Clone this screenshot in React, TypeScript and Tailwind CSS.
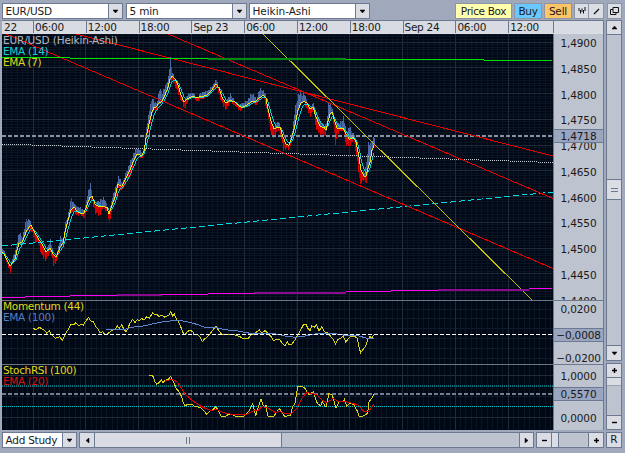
import type { ReactNode } from "react";

type Point = [number, number];

const TIMES = ["06:00", "12:00", "18:00", "Sep 23", "06:00", "12:00", "18:00", "Sep 24", "06:00"];
const PRICES = ["1,4900", "1,4850", "1,4800", "1,4750", "1,4700", "1,4650", "1,4600", "1,4550", "1,4500", "1,4450", "1,4400"];

// x, fast average, bar top, bar bottom
const BARS: number[][] = [
  [2, 252, 249, 253], [4, 254, 251, 256], [7, 260, 259, 266], [10, 266, 265, 273], [12, 263, 257, 264], [15, 259, 250, 260],
  [17, 250, 238, 251], [19, 243, 231, 244], [22, 242, 236, 243], [26, 232, 217, 233], [29, 227, 218, 229], [31, 225, 223, 233],
  [35, 233, 232, 243], [38, 238, 237, 244], [42, 244, 243, 259], [46, 252, 250, 261], [50, 248, 239, 252], [53, 254, 253, 267],
  [56, 257, 254, 262], [60, 247, 236, 248], [63, 243, 236, 245], [65, 232, 222, 235], [68, 220, 211, 221], [71, 210, 196, 213],
  [74, 207, 204, 214], [77, 211, 207, 216], [80, 213, 207, 215], [84, 213, 211, 220], [87, 205, 192, 207], [90, 197, 183, 199],
  [92, 196, 194, 204], [95, 204, 202, 214], [99, 206, 200, 217], [103, 206, 196, 208], [107, 207, 205, 213], [109, 214, 212, 225],
  [112, 205, 194, 207], [115, 197, 187, 199], [118, 184, 175, 188], [122, 186, 183, 191], [126, 178, 170, 180], [129, 172, 163, 180],
  [133, 162, 152, 163], [137, 154, 146, 156], [142, 155, 153, 158], [144, 151, 145, 152], [146, 138, 125, 140], [149, 124, 108, 127],
  [152, 112, 95, 114], [154, 107, 101, 110], [156, 107, 103, 112], [159, 103, 88, 104], [162, 101, 90, 102], [165, 95, 85, 97],
  [168, 87, 75, 89], [170, 79, 57, 81], [172, 76, 73, 82], [175, 79, 77, 88], [178, 85, 83, 96], [181, 95, 93, 102],
  [184, 102, 100, 110], [188, 98, 92, 100], [192, 96, 93, 98], [197, 97, 95, 101], [202, 96, 92, 99], [207, 95, 91, 97],
  [211, 91, 86, 93], [216, 84, 79, 87], [219, 88, 87, 97], [222, 97, 95, 106], [226, 103, 101, 110], [230, 100, 93, 102],
  [234, 101, 99, 105], [239, 106, 104, 112], [242, 107, 103, 109], [247, 105, 99, 106], [252, 101, 91, 103], [256, 101, 99, 105],
  [259, 98, 88, 100], [263, 95, 89, 97], [266, 98, 96, 110], [268, 109, 107, 120], [271, 121, 119, 137], [274, 129, 127, 140],
  [277, 127, 119, 129], [280, 127, 125, 136], [283, 137, 135, 152], [286, 144, 142, 149], [289, 145, 143, 151], [292, 137, 127, 138],
  [295, 125, 105, 127], [298, 110, 93, 112], [301, 103, 92, 105], [304, 101, 93, 103], [307, 103, 102, 113], [310, 109, 107, 117],
  [313, 107, 103, 109], [316, 117, 115, 132], [320, 126, 121, 135], [324, 127, 125, 139], [326, 130, 122, 132], [328, 121, 102, 122],
  [330, 114, 103, 116], [332, 112, 109, 115], [335, 122, 120, 145], [337, 128, 124, 136], [340, 128, 121, 131], [343, 128, 115, 131],
  [346, 134, 132, 148], [349, 139, 125, 147], [353, 137, 133, 139], [356, 142, 140, 157], [359, 157, 155, 181], [361, 170, 168, 185],
  [364, 176, 173, 180], [366, 176, 160, 184], [368, 168, 141, 170], [370, 162, 143, 164], [372, 150, 137, 152], [374, 145, 136, 148],
];

// study curves, in thirds of a pixel
const MOMENTUM = "100,115 108,120 118,112 128,118 135,122 140,130 148,122 153,133 160,138 165,145 172,142 180,140 187,152 193,138 200,125 207,115 212,103 222,103 228,98 235,107 245,103 250,105 258,92 266,82 272,93 280,95 286,108 295,118 300,128 308,125 315,135 325,130 335,122 345,118 352,108 358,115 365,105 372,118 378,125 385,112 390,100 398,88 405,98 412,88 418,92 425,85 432,90 440,80 448,85 458,68 465,75 470,72 478,80 485,75 492,82 500,78 507,75 512,65 518,78 523,72 528,85 535,95 542,110 550,130 555,135 562,125 570,120 578,125 583,135 590,132 600,140 607,155 613,148 623,140 635,125 648,108 655,120 665,133 680,135 695,132 710,137 720,140 730,147 745,145 755,132 763,133 770,125 778,120 785,128 795,122 805,132 815,142 820,152 830,147 840,150 847,160 855,168 862,155 868,165 875,163 885,150 895,133 903,118 910,105 918,102 923,115 930,122 935,108 943,112 950,105 957,123 965,110 973,125 983,128 993,140 1000,148 1007,162 1013,148 1023,145 1030,138 1037,155 1045,147 1053,138 1063,138 1072,145 1078,175 1082,188 1090,178 1097,168 1103,148 1110,140 1115,143 1122,135";
const MOMENTUM_EMA = "318,118 375,118 395,112 430,108 480,97 525,91 540,91 560,95 590,103 615,112 655,114 675,119 715,123 750,130 795,131 825,131 855,138 885,142 915,138 955,130 1005,131 1045,137 1075,137 1100,145 1122,145";
const STOCH = "448,256 458,257 465,275 470,283 478,277 484,270 488,278 497,270 505,268 512,259 520,275 530,298 537,305 545,320 550,340 556,347 565,342 575,342 585,350 600,352 610,360 620,373 630,362 640,358 648,350 655,362 663,378 675,380 687,372 700,375 710,380 730,380 740,370 748,363 758,340 767,378 775,350 783,328 790,348 795,355 798,345 803,378 820,380 828,370 838,355 845,368 855,380 872,375 877,352 885,340 893,290 905,288 915,295 927,315 940,305 952,340 962,348 967,335 978,352 987,310 997,315 1008,355 1017,335 1030,335 1033,328 1040,348 1052,338 1062,345 1073,365 1078,380 1090,378 1103,370 1107,335 1115,325 1122,313";
const STOCH_EMA = "495,272 520,268 535,280 555,312 575,330 600,347 615,355 635,362 650,358 670,368 700,374 735,375 760,362 773,362 785,350 800,352 825,367 840,365 855,370 875,370 890,355 905,325 920,308 935,310 950,315 965,330 980,338 1000,325 1015,335 1030,333 1055,340 1075,345 1090,363 1107,363 1122,343";

const toPoints = (raw: string) =>
  raw
    .split(" ")
    .map((p) => p.split(",").map(Number))
    .map(([x, y]) => `${(x / 3).toFixed(1)},${(290 + y / 3).toFixed(1)}`)
    .join(" ");

const range = (from: number, to: number, step: number) => {
  const out: number[] = [];
  for (let v = from; v <= to; v += step) out.push(v);
  return out;
};

function sample(x: number) {
  const i = Math.max(1, BARS.findIndex((b) => b[0] >= x));
  const a = BARS[i - 1];
  const b = BARS[i];
  const t = (x - a[0]) / (b[0] - a[0]);
  return [1, 2, 3].map((k) => a[k] + (b[k] - a[k]) * t);
}

const series = range(2, 374, 1).map((x) => {
  const [mid, top, bottom] = sample(x);
  return { x, mid, top, bottom };
});

let slow = series[0].mid;
const slowLine: Point[] = series.map((s) => {
  slow += (s.mid - slow) * 0.3;
  return [s.x, Math.round(slow + 0.5)];
});
const join = (pts: Point[]) => pts.map((p) => p.join(",")).join(" ");

const MAGENTA: [number, number, number, boolean][] = [
  [2, 25, 297, true], [25, 70, 296, true], [70, 117, 295, true], [117, 162, 294, false], [162, 208, 294, true], [208, 254, 293, true],
  [254, 300, 292, false], [300, 346, 292, false], [346, 391, 291, true], [391, 438, 290, true], [438, 484, 289, false], [484, 529, 289, false], [529, 552, 288, true],
];

function Chart() {
  return (
    <svg width="551" height="396" viewBox="2 34 551 396" shapeRendering="crispEdges" fill="none" className="block">
      <rect x="2" y="34" width="551" height="396" fill="#000816" />
      {/* minor grid */}
      <g stroke="#0a1422">
        {range(6.6, 552, 5.28).map((x) => <path key={x} d={`M${Math.floor(x) + 0.5} 34V430`} />)}
        {range(34.3, 299, 2.575).map((y) => <path key={y} d={`M2 ${Math.floor(y) + 0.5}H553`} />)}
      </g>
      <g stroke="#0f1a28">
        {[309, 318, 328, 338, 348, 358, 386, 396, 406].map((y) => <path key={y} d={`M2 ${y + 0.5}H553`} />)}
      </g>
      {/* major grid */}
      <g stroke="#202b39">
        {range(33, 552, 52.8).map((x) => <path key={x} d={`M${Math.floor(x) + 0.5} 34V430`} />)}
        {range(42, 299, 25.75).map((y) => <path key={y} d={`M2 ${Math.floor(y) + 0.5}H553`} />)}
        <path d="M2 375.5H553M2 417.5H553" />
      </g>

      {/* price bars */}
      {series.map(({ x, mid, top, bottom }) => {
        const j = (x * 7) % 5;
        const up = mid - top;
        const down = bottom - mid;
        const t = top + (up > 4 ? j * 0.18 * Math.min(up, 10) * 0.5 : 0);
        const b = bottom - (down > 4 ? j * 0.18 * Math.min(down, 10) * 0.5 : 0);
        return (
          <g key={x}>
            {up > 2.5 && <rect x={x} y={Math.round(t)} width="1" height={Math.max(1, Math.round(mid - t) + 1)} fill={j === 2 ? "#334d80" : "#4a69a5"} />}
            {down > 2.5 && <rect x={x} y={Math.round(mid)} width="1" height={Math.max(1, Math.round(b - mid))} fill={j === 3 ? "#8c0408" : "#d80000"} />}
          </g>
        );
      })}
      <polyline points={join(slowLine)} stroke="#00d0d8" />
      <polyline points={join(series.map((s): Point => [s.x, Math.round(s.mid)]))} stroke="#f0e810" />

      {/* horizontal levels */}
      <path d="M2 136H553" stroke="#8790a0" strokeWidth="2" strokeDasharray="4 2" />
      <path d="M2 144L553 162.5" stroke="#c8ccd2" strokeDasharray="1 1" />
      <path d="M2 246L553 192" stroke="#00dce4" strokeDasharray="6 3" />

      {/* trend lines */}
      <path d="M6 34L553 268.5M76 34L553 156M168 34L553 198.5" stroke="#e80000" />
      <path d="M263 34L532 300" stroke="#c4c010" />
      <path d="M2 57.5H70M70 58.5H208M346 59.5H484M484 60.5H552" stroke="#00e400" />
      <path d="M208 59H346" stroke="#008a10" strokeWidth="2" />
      {MAGENTA.map(([x1, x2, y, bright]) => (
        <rect key={x1} x={x1} y={y} width={x2 - x1} height={bright ? 1 : 2} fill={bright ? "#ff00f0" : "#8a0a90"} />
      ))}

      {/* momentum */}
      <rect x="2" y="300" width="551" height="1" fill="#6c7584" />
      <polyline points={toPoints(MOMENTUM)} stroke="#dcd418" />
      <polyline points={toPoints(MOMENTUM_EMA)} stroke="#5c84cc" />
      <path d="M2 334.5H553" stroke="#ffffff" strokeDasharray="4 2" />

      {/* stoch rsi */}
      <rect x="2" y="364" width="551" height="1" fill="#6c7584" />
      <path d="M2 386H553" stroke="#0a7078" strokeWidth="2" strokeDasharray="1 1" />
      <path d="M2 406.5H553" stroke="#00c4cc" strokeDasharray="1 1" />
      <path d="M2 394H553" stroke="#747e90" strokeWidth="2" strokeDasharray="4 2" />
      <polyline points={toPoints(STOCH)} stroke="#dcd418" />
      <polyline points={toPoints(STOCH_EMA)} stroke="#e00000" />
    </svg>
  );
}

function Arrow({ dir }: { dir: "up" | "down" | "left" | "right" }) {
  const d = { up: "M0 4h5L2.500 1z", down: "M0 1h5L2.500 4z", left: "M4 0v5L1 2.500z", right: "M1 0v5L4 2.500z" }[dir];
  return (
    <svg width="5" height="5" viewBox="0 0 5 5" className="shrink-0">
      <path d={d} fill="#000" stroke="#000" strokeWidth=".5" />
    </svg>
  );
}

function Sign({ plus }: { plus?: boolean }) {
  return (
    <svg width="5" height="5" viewBox="0 0 5 5" className="shrink-0">
      <path d={plus ? "M0 2.500H5M2.500 0V5" : "M0 2.500H5"} stroke="#000" strokeWidth="1.4" />
    </svg>
  );
}

function Key({ className, children }: { className: string; children?: ReactNode }) {
  return <div className={`flex shrink-0 items-center justify-center bg-[#dadde4] ${className}`}>{children}</div>;
}

function Select({ label, className }: { label: string; className: string }) {
  return (
    <div className={`flex h-4 shrink-0 border border-[#6c7990] bg-white ${className}`}>
      <span className="flex-1 pl-[2.5px] leading-[14px]">{label}</span>
      <Key className="w-[14px] border-l border-[#6c7990]"><Arrow dir="down" /></Key>
    </div>
  );
}

function Axis({ className, children }: { className: string; children: ReactNode }) {
  return <div className={`relative overflow-hidden text-center tracking-[-0.15px] ${className}`}>{children}</div>;
}

function Marker({ className, value }: { className: string; value: string }) {
  return (
    <div className={`absolute inset-x-0 h-[14px] border-y border-[#6c7990] bg-[#9aa5c0] leading-3 ${className}`}>{value}</div>
  );
}

export default function App() {
  return (
    <div className="flex h-[453px] w-[625px] flex-col overflow-hidden bg-[#a0a9bb] pl-0.5 font-['DejaVu_Sans','Verdana',sans-serif] text-[10.5px] whitespace-nowrap text-[#1a1a1a]">
      {/* toolbar */}
      <div className="flex h-5 shrink-0 pt-[3px]">
        <Select label="EUR/USD" className="w-[121px] tracking-[-0.15px]" />
        <Select label="5 min" className="ml-[3px] w-[121px] tracking-[-0.15px]" />
        <Select label="Heikin-Ashi" className="ml-[2px] w-[121px] tracking-[-0.05px]" />
        <button className="ml-[85px] h-4 w-[57px] border border-[#8d95a3] bg-[#ffffae] leading-[14px] tracking-[-0.35px]">Price Box</button>
        <button className="ml-[2px] h-4 w-7 border border-[#8d95a3] bg-[#68c8ff] leading-[14px] tracking-[-0.3px]">Buy</button>
        <button className="ml-[2px] h-4 w-7 border border-[#8d95a3] bg-[#ffc468] leading-[14px] tracking-[-0.2px]">Sell</button>
        <Key className="ml-[2px] h-4 w-[15px] border border-[#8d95a3]">
          <svg width="8" height="8" viewBox="0 0 8 8" fill="none" stroke="#111">
            <path d="M1 1V4M2.500 3V6.500M4 1.500V5M5.500 3V6.500M7 0V4" />
          </svg>
        </Key>
        <Key className="h-4 w-[15px] border border-l-0 border-[#8d95a3]">
          <svg width="7" height="7" viewBox="0 0 7 7"><path d="M1 6L6 1" stroke="#111" strokeWidth="1.2" /></svg>
        </Key>
        <Key className="ml-[3px] h-4 w-[15px] border border-[#8d95a3]">
          <svg width="9" height="8" viewBox="0 0 9 8" fill="none" stroke="#111">
            <path d="M3 .5H8.500V5.500H3zM3 2.500H.5V7.500H6V5.500" />
          </svg>
        </Key>
      </div>

      <div className="flex h-[410px] shrink-0">
        <div className="w-[602px] border-r border-[#6c7990]">
          {/* time scale */}
          <div className="flex h-[14px] border-y border-[#6c7990] border-b-[#dcdee4] bg-[#d8dbe2] leading-[13px] tracking-[-0.3px]">
            <span className="w-[31px] shrink-0 pl-0.5">22</span>
            {TIMES.map((t, i) => (
              <span key={i} className="w-[52.8px] shrink-0 border-l border-[#6c7990] pl-px">{t}</span>
            ))}
            <span className="w-[45px] shrink-0 border-l border-[#6c7990] pl-px">12:00</span>
            <span className="flex-1 border-l border-[#6c7990]" />
          </div>
          <div className="flex">
            <div className="relative w-[551px]">
              <Chart />
              <div className="absolute top-px left-px leading-[11px] tracking-[-0.15px]">
                <div className="text-[#b4b8bf]">EUR/USD (Heikin-Ashi)</div>
                <div className="tracking-[-0.3px] text-[#18d0d4]">EMA (14)</div>
                <div className="tracking-[-0.4px] text-[#e0d818]">EMA (7)</div>
              </div>
              <div className="absolute top-[267px] left-px leading-[11px] tracking-[-0.3px]">
                <div className="text-[#e0d818]">Momentum (44)</div>
                <div className="text-[#587cc0]">EMA (100)</div>
              </div>
              <div className="absolute top-[331px] left-px leading-[11px] tracking-[-0.35px]">
                <div className="text-[#e0d818]">StochRSI (100)</div>
                <div className="text-[#d81010]">EMA (20)</div>
              </div>
            </div>
            <div className="flex flex-1 flex-col border-l border-[#6c7990] bg-[#bdc3cf]">
              <Axis className="h-[267px] border-b border-[#6c7990]">
                <div className="-mt-1">
                  {PRICES.map((p) => <div key={p} className="h-[25.75px] leading-[26px]">{p}</div>)}
                </div>
                <Marker className="top-[95px]" value="1,4718" />
              </Axis>
              <Axis className="flex h-16 flex-col justify-between border-b border-[#6c7990] pt-[2px] leading-[13px]">
                <div>0,0200</div>
                <div className="translate-y-px">−0,0200</div>
                <Marker className="top-[27px]" value="−0,0008" />
              </Axis>
              <Axis className="flex h-[65px] flex-col justify-between pt-[5px] pb-[5px] leading-[13px]">
                <div>1,0000</div>
                <div>0,0000</div>
                <Marker className="top-[22px]" value="0,5570" />
              </Axis>
            </div>
          </div>
        </div>

        {/* vertical scroll and zoom */}
        <div className="ml-[2px] w-4">
          <div className="flex h-[341px] flex-col border border-[#6c7990] bg-[#bdc3cf]">
            <Key className="h-[14px] border-b border-[#6c7990]"><Arrow dir="up" /></Key>
            <Key className="mt-[144px] h-[21px] border-y border-[#6c7990]">
              <div className="h-1 w-[7px] border-y border-[#6c7990]" />
            </Key>
            <Key className="mt-auto h-[15px] border-t border-[#6c7990]"><Arrow dir="down" /></Key>
          </div>
          <div className="mt-[2px] flex h-[67px] flex-col border border-[#6c7990] bg-[#bdc3cf]">
            <Key className="h-[14px] border-b border-[#6c7990]"><Sign plus /></Key>
            <Key className="h-2 border-b border-[#9aa2b0]" />
            <Key className="mt-auto h-[14px] border-t border-[#6c7990]"><Sign /></Key>
          </div>
        </div>
      </div>

      {/* bottom bar */}
      <div className="mt-[2px] flex h-4 shrink-0">
        <Select label="Add Study" className="w-[75px] tracking-[-0.25px]" />
        <div className="ml-[2px] flex w-[455px] border border-[#6c7990] bg-[#bdc3cf]">
          <Key className="w-[15px] border-r border-[#6c7990]"><Arrow dir="left" /></Key>
          <Key className="w-[187px] border-r border-[#6c7990]">
            <div className="h-[7px] w-1 border-x border-[#6c7990]" />
          </Key>
          <Key className="ml-auto w-[14px] border-l border-[#6c7990]"><Arrow dir="right" /></Key>
        </div>
        <div className="ml-[2px] flex w-[68px] border border-[#6c7990] bg-[#bdc3cf]">
          <Key className="w-[15px] border-r border-[#6c7990]"><Sign /></Key>
          <Key className="w-[7px] border-r border-[#6c7990]" />
          <Key className="ml-auto w-[15px] border-l border-[#6c7990]"><Sign plus /></Key>
        </div>
        <Key className="ml-[2px] w-4 border border-[#6c7990]">R</Key>
      </div>
    </div>
  );
}
